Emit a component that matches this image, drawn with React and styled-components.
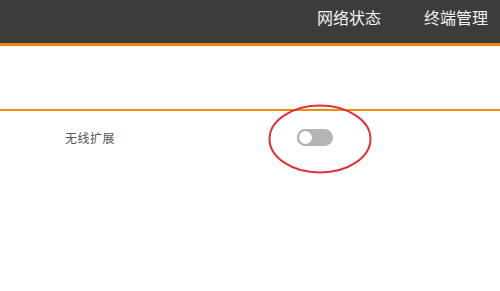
import React from "react";
import styled, { createGlobalStyle } from "styled-components";

const Global = createGlobalStyle`
  html, body { margin: 0; padding: 0; background: #fff; }
  body { font-family: "Microsoft YaHei", "Noto Sans CJK SC", sans-serif; }
`;

const Page = styled.div`
  position: relative;
  width: 500px;
  height: 291px;
  overflow: hidden;
  background: #fff;
`;

const Header = styled.header`
  height: 43px;
  background: #3c3c3c;
  border-bottom: 3px solid #f08300;
  display: flex;
  justify-content: flex-end;
  align-items: center;
  padding-right: 12px;
  gap: 43px;
  box-sizing: content-box;
`;

const NavItem = styled.span`
  color: #f2f2f2;
  font-size: 16px;
  line-height: 16px;
  margin-top: -9px;
  font-family: "Noto Sans CJK SC", sans-serif;
`;

const Spacer = styled.div`
  height: 63px;
`;

const Divider = styled.div`
  height: 2px;
  background: #f58a10;
`;

const Row = styled.div`
  display: flex;
  align-items: center;
  height: 52px;
  padding-left: 65px;
`;

const Label = styled.span`
  width: 232px;
  color: #555;
  font-size: 12px;
  letter-spacing: 0.5px;
  font-family: "Noto Sans CJK SC", sans-serif;
`;

const Toggle = styled.div`
  position: relative;
  width: 36px;
  height: 17px;
  border-radius: 9px;
  background: #b5b5b5;
`;

const Knob = styled.div`
  position: absolute;
  left: 0;
  top: 0;
  width: 13px;
  height: 13px;
  border-radius: 50%;
  background: #fff;
  border: 2px solid #b0b0b0;
`;

const Mark = styled.svg`
  position: absolute;
  left: 266px;
  top: 102px;
`;

export default function App() {
  return (
    <Page>
      <Global />
      <Header>
        <NavItem>网络状态</NavItem>
        <NavItem>终端管理</NavItem>
      </Header>
      <Spacer />
      <Divider />
      <Row>
        <Label>无线扩展</Label>
        <Toggle>
          <Knob />
        </Toggle>
      </Row>
      <Mark width="110" height="76" viewBox="0 0 110 76">
        <ellipse cx="54" cy="37" rx="50.5" ry="33.5" fill="none" stroke="#e0313b" strokeWidth="2" />
      </Mark>
    </Page>
  );
}
